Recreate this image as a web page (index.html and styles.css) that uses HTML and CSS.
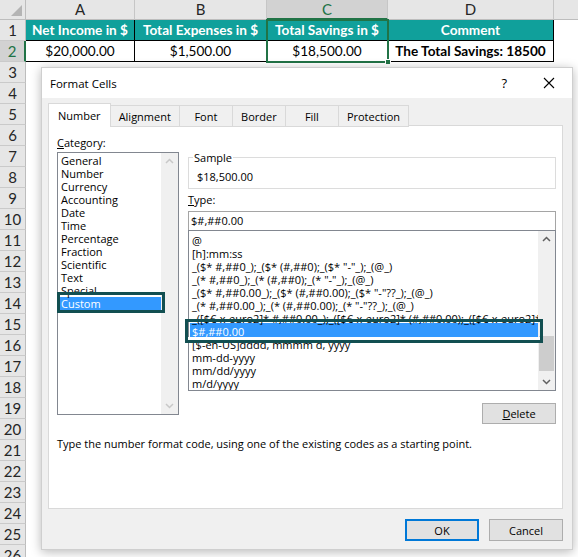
FILE: index.html
```html
<!DOCTYPE html>
<html lang="en">
<head>
    <meta charset="UTF-8">
    <meta name="viewport" content="width=device-width, initial-scale=1.0">
    <title>Format Cells</title>
    <link rel="stylesheet" href="styles.css">
</head>
<body>
    <div class="sheet">
        <div class="corner"><span class="tri"></span></div>
        <div class="colhead">A</div>
        <div class="colhead">B</div>
        <div class="colhead active">C</div>
        <div class="colhead">D</div>
        <div class="colhead rest"></div>

        <div class="rowhead">1</div>
        <div class="cell head">Net Income in $</div>
        <div class="cell head">Total Expenses in $</div>
        <div class="cell head">Total Savings in $</div>
        <div class="cell head">Comment</div>
        <div class="blank"></div>

        <div class="rowhead active">2</div>
        <div class="cell">$20,000.00</div>
        <div class="cell">$1,500.00</div>
        <div class="cell">$18,500.00</div>
        <div class="cell bold">The Total Savings: 18500</div>
        <div class="blank"></div>

        <div class="rowhead">3</div><div class="empty"></div>
        <div class="rowhead">4</div><div class="empty"></div>
        <div class="rowhead">5</div><div class="empty"></div>
        <div class="rowhead">6</div><div class="empty"></div>
        <div class="rowhead">7</div><div class="empty"></div>
        <div class="rowhead">8</div><div class="empty"></div>
        <div class="rowhead">9</div><div class="empty"></div>
        <div class="rowhead">10</div><div class="empty"></div>
        <div class="rowhead">11</div><div class="empty"></div>
        <div class="rowhead">12</div><div class="empty"></div>
        <div class="rowhead">13</div><div class="empty"></div>
        <div class="rowhead">14</div><div class="empty"></div>
        <div class="rowhead">15</div><div class="empty"></div>
        <div class="rowhead">16</div><div class="empty"></div>
        <div class="rowhead">17</div><div class="empty"></div>
        <div class="rowhead">18</div><div class="empty"></div>
        <div class="rowhead">19</div><div class="empty"></div>
        <div class="rowhead">20</div><div class="empty"></div>
        <div class="rowhead">21</div><div class="empty"></div>
        <div class="rowhead">22</div><div class="empty"></div>
        <div class="rowhead">23</div><div class="empty"></div>
        <div class="rowhead">24</div><div class="empty"></div>
        <div class="rowhead">25</div><div class="empty"></div>
        <div class="rowhead">26</div><div class="empty"></div>

        <div class="selection"><span class="handle"></span></div>
    </div>

    <div class="dialog">
        <div class="titlebar">
            <span class="title">Format Cells</span>
            <span class="help">?</span>
            <svg class="close" width="12" height="12" viewBox="0 0 12 12">
                <path d="M1 1 L11 11 M11 1 L1 11" stroke="#000" stroke-width="1.1" fill="none"/>
            </svg>
        </div>

        <div class="dlg-body">
            <div class="tabs">
                <div class="tab selected">Number</div>
                <div class="tab">Alignment</div>
                <div class="tab">Font</div>
                <div class="tab">Border</div>
                <div class="tab">Fill</div>
                <div class="tab">Protection</div>
            </div>

            <div class="panel">
                <div class="columns">
                    <div class="left">
                        <label class="lbl"><u>C</u>ategory:</label>
                        <div class="listbox category">
                            <div class="items">
                                <div class="item">General</div>
                                <div class="item">Number</div>
                                <div class="item">Currency</div>
                                <div class="item">Accounting</div>
                                <div class="item">Date</div>
                                <div class="item">Time</div>
                                <div class="item">Percentage</div>
                                <div class="item">Fraction</div>
                                <div class="item">Scientific</div>
                                <div class="item">Text</div>
                                <div class="item">Special</div>
                                <div class="item picked">Custom</div>
                            </div>
                            <div class="scrollbar off">
                                <svg class="arrow" width="17" height="17" viewBox="0 0 17 17"><path d="M5 10 L8.5 6.5 L12 10" stroke="#c8c8c8" stroke-width="1.5" fill="none"/></svg>
                                <div class="track"></div>
                                <svg class="arrow" width="17" height="17" viewBox="0 0 17 17"><path d="M5 7 L8.5 10.5 L12 7" stroke="#c8c8c8" stroke-width="1.5" fill="none"/></svg>
                            </div>
                            <div class="mark mark-cat"></div>
                        </div>
                    </div>

                    <div class="right">
                        <fieldset class="sample">
                            <legend>Sample</legend>
                            <div class="sample-value">$18,500.00</div>
                        </fieldset>

                        <label class="lbl type-lbl"><u>T</u>ype:</label>
                        <div class="type-input">$#,##0.00</div>

                        <div class="listbox types">
                            <div class="items">
                                <div class="item">@</div>
                                <div class="item">[h]:mm:ss</div>
                                <div class="item">_($* #,##0_);_($* (#,##0);_($* "-"_);_(@_)</div>
                                <div class="item">_(* #,##0_);_(* (#,##0);_(* "-"_);_(@_)</div>
                                <div class="item">_($* #,##0.00_);_($* (#,##0.00);_($* "-"??_);_(@_)</div>
                                <div class="item">_(* #,##0.00_);_(* (#,##0.00);_(* "-"??_);_(@_)</div>
                                <div class="item">_([$€-x-euro2]* #,##0.00_);_([$€-x-euro2]* (#,##0.00);_([$€-x-euro2]* "-"??_);_(@_)</div>
                                <div class="item picked">$#,##0.00</div>
                                <div class="item">[$-en-US]dddd, mmmm d, yyyy</div>
                                <div class="item">mm-dd-yyyy</div>
                                <div class="item">mm/dd/yyyy</div>
                                <div class="item">m/d/yyyy</div>
                            </div>
                            <div class="scrollbar">
                                <svg class="arrow" width="17" height="17" viewBox="0 0 17 17"><path d="M5 10 L8.5 6.5 L12 10" stroke="#606060" stroke-width="1.5" fill="none"/></svg>
                                <div class="track"><div class="thumb"></div></div>
                                <svg class="arrow" width="17" height="17" viewBox="0 0 17 17"><path d="M5 7 L8.5 10.5 L12 7" stroke="#606060" stroke-width="1.5" fill="none"/></svg>
                            </div>
                            <div class="mark mark-type"></div>
                        </div>

                        <div class="delete-row">
                            <button class="btn"><u>D</u>elete</button>
                        </div>
                    </div>
                </div>

                <p class="hint">Type the number format code, using one of the existing codes as a starting point.</p>
            </div>

            <div class="actions">
                <button class="btn ok">OK</button>
                <button class="btn">Cancel</button>
            </div>
        </div>
    </div>
</body>
</html>
```

FILE: styles.css
```css
*{
    margin: 0;
    padding: 0;
    box-sizing: border-box;
}
body{
    width: 578px;
    height: 557px;
    overflow: hidden;
    background: #fff;
    position: relative;
    font-family: Lato, "Liberation Sans", sans-serif;
}

/* spreadsheet behind the dialog */
.sheet{
    display: grid;
    grid-template-columns: 26px 109px 132px 121px 166px 1fr;
    grid-template-rows: 20px;
    grid-auto-rows: 21px;
    position: relative;
}
.corner{
    background: #e6e6e6;
    border-right: 1px solid #bdbdbd;
    border-bottom: 1px solid #bdbdbd;
    display: flex;
    justify-content: flex-end;
    align-items: flex-end;
    padding: 0 3px 3px 0;
}
.tri{
    width: 0;
    height: 0;
    border-left: 11px solid transparent;
    border-bottom: 11px solid #b4b4b4;
}
.colhead{
    background: #e6e6e6;
    border-right: 1px solid #c6c6c6;
    border-bottom: 1px solid #bdbdbd;
    color: #262626;
    font-size: 15px;
    text-align: center;
    line-height: 19px;
}
.colhead.active{
    background: #d2d2d2;
    color: #217346;
    border-bottom: 2px solid #217346;
}
.colhead.rest{
    border-right: none;
}
.rowhead{
    background: #e6e6e6;
    border-right: 1px solid #bdbdbd;
    border-bottom: 1px solid #cacaca;
    color: #262626;
    font-size: 15px;
    text-align: center;
    line-height: 20px;
}
.rowhead.active{
    background: #d2d2d2;
    color: #217346;
    border-right: 2px solid #217346;
}
.cell{
    border-right: 1px solid #000;
    border-bottom: 1px solid #000;
    font-size: 13.6px;
    text-align: center;
    line-height: 20px;
    white-space: nowrap;
    overflow: hidden;
    color: #000;
}
.cell.head{
    background: #10a09b;
    color: #fff;
    font-weight: bold;
}
.cell.bold{
    font-weight: bold;
}
.empty{
    grid-column: 2 / -1;
}
.selection{
    position: absolute;
    left: 266px;
    top: 19px;
    width: 123px;
    height: 44px;
    border: 2px solid #217346;
}
.handle{
    position: absolute;
    right: -4px;
    bottom: -4px;
    width: 6px;
    height: 6px;
    background: #217346;
    border: 1px solid #fff;
}

/* Format Cells dialog */
.dialog{
    position: absolute;
    left: 41px;
    top: 67px;
    width: 532px;
    height: 483px;
    background: #f0f0f0;
    border: 1px solid #cfcfcf;
    box-shadow: 0 2px 10px rgba(0, 0, 0, 0.28);
    font-family: "Open Sans", "Noto Sans", sans-serif;
    font-size: 11px;
    color: #000;
    display: flex;
    flex-direction: column;
}
.titlebar{
    height: 30px;
    background: #fff;
    display: flex;
    align-items: center;
    padding-left: 8px;
}
.title{
    flex: 1;
    font-size: 11.5px;
}
.help{
    font-size: 13px;
    margin-right: 36px;
}
.close{
    margin-right: 17px;
}
.dlg-body{
    flex: 1;
    padding: 7px 9px 7px 6px;
    display: flex;
    flex-direction: column;
}
.tabs{
    display: flex;
    height: 21px;
    margin-bottom: -1px;
    position: relative;
    z-index: 1;
}
.tab{
    min-width: 53px;
    padding: 0 8px;
    border: 1px solid #d9d9d9;
    border-left: none;
    background: #f0f0f0;
    text-align: center;
    line-height: 22px;
    height: 22px;
}
.tab.selected{
    background: #fff;
    border-left: 1px solid #d9d9d9;
    border-bottom: none;
    height: 24px;
    margin-top: -2px;
    line-height: 23px;
    padding: 0 9px;
}
.panel{
    height: 384px;
    background: #fff;
    border: 1px solid #d9d9d9;
    padding: 9px 6px 0 8px;
}
.columns{
    display: flex;
    gap: 9px;
}
.left{
    width: 122px;
    flex: none;
}
.right{
    flex: 1;
    min-width: 0;
}
.lbl{
    display: block;
    line-height: 15px;
}
.listbox{
    position: relative;
    display: flex;
    border: 1px solid #828790;
    background: #fff;
}
.category{
    margin-top: 2px;
    height: 263px;
}
.items{
    flex: 1;
    min-width: 0;
    padding: 1px 0 0 1px;
    overflow: hidden;
    white-space: nowrap;
}
.item{
    line-height: 13px;
    height: 13px;
    padding-left: 2px;
}
.item.picked{
    background: #3399ff;
    color: #fff;
}
.scrollbar{
    width: 17px;
    flex: none;
    background: #f0f0f0;
    display: flex;
    flex-direction: column;
}
.arrow{
    display: block;
    flex: none;
}
.track{
    flex: 1;
    display: flex;
    flex-direction: column;
    justify-content: flex-end;
    padding: 0 1px 2px 1px;
}
.thumb{
    height: 35px;
    background: #cdcdcd;
}
.mark{
    position: absolute;
    border: 3px solid #124f51;
    pointer-events: none;
}
.mark-cat{
    left: -1px;
    top: 139px;
    width: 108px;
    height: 21px;
}
.sample{
    margin-top: 15px;
    border: 1px solid #dcdcdc;
    padding: 0 8px 3px 8px;
    height: 39px;
}
.sample legend{
    padding: 0 1px;
    margin-left: -4px;
    line-height: 15px;
}
.sample-value{
    line-height: 15px;
    margin-top: 4px;
}
.type-lbl{
    margin-top: 3px;
}
.type-input{
    margin-top: 4px;
    height: 20px;
    border: 1px solid #a5a5a5;
    padding-left: 2px;
    line-height: 17px;
}
.types{
    margin-top: -1px;
    height: 161px;
}
.types .items{
    padding-top: 3px;
}
.types .item.picked{
    box-shadow: 0 -2px 0 #3399ff;
}
.mark-type{
    left: -4px;
    top: 88px;
    width: 358px;
    height: 24px;
    box-shadow: inset 0 -3px 0 #fff;
}
.delete-row{
    display: flex;
    justify-content: flex-end;
    margin-top: 12px;
}
.btn{
    width: 74px;
    height: 21px;
    background: #e1e1e1;
    border: 1px solid #adadad;
    font-family: "Open Sans", "Noto Sans", sans-serif;
    font-size: 11px;
    color: #000;
}
.hint{
    margin-top: 12px;
    line-height: 15px;
}
.actions{
    display: flex;
    justify-content: flex-end;
    gap: 10px;
    margin-top: 10px;
}
.actions .btn{
    height: 22px;
}
.btn.ok{
    border: 2px solid #0078d7;
}
```
